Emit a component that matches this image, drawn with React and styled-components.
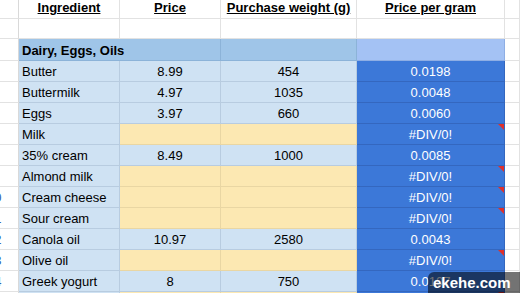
import React from "react";
import styled, { createGlobalStyle } from "styled-components";

const Global = createGlobalStyle`
  html, body { margin: 0; padding: 0; overflow: hidden; background: #fff; }
  body { font-family: "Liberation Sans", Arial, sans-serif; }
`;

const tones = {
  white: { bg: "#ffffff", line: "#e2e2e2", fg: "#000" },
  light: { bg: "#cfe2f3", line: "#b8cce0", fg: "#000" },
  section: { bg: "#9fc5e8", line: "#8cb3d8", fg: "#000" },
  sectionD: { bg: "#a4c2f4", line: "#8eaee4", fg: "#000" },
  peach: { bg: "#fce8b2", line: "#e9d6a3", fg: "#000" },
  dark: { bg: "#3c78d8", line: "#3467bf", fg: "#fff" },
};

const Page = styled.div`
  position: relative;
  width: 520px;
  height: 293px;
  overflow: hidden;
`;

const Sheet = styled.div`
  display: grid;
  grid-template-columns: 19px 101px 101px 136px 148px 1fr;
  font-size: 13px;
  line-height: 15px;
`;

const Cell = styled.div`
  box-sizing: border-box;
  position: relative;
  height: ${(p) => p.$h}px;
  grid-column: span ${(p) => p.$span || 1};
  background: ${(p) => tones[p.$tone].bg};
  color: ${(p) => tones[p.$tone].fg};
  border-right: 1px solid ${(p) => tones[p.$tone].line};
  border-bottom: 1px solid ${(p) => tones[p.$tone].line};
  display: flex;
  align-items: flex-end;
  justify-content: ${(p) => (p.$center ? "center" : "flex-start")};
  padding: 0 3px ${(p) => p.$pb ?? 2}px;
  white-space: nowrap;
  overflow: hidden;
  font-weight: ${(p) => (p.$bold ? 700 : 400)};
  text-decoration: ${(p) => (p.$underline ? "underline" : "none")};
`;

const Gutter = styled.div`
  box-sizing: border-box;
  height: ${(p) => p.$h}px;
  background: #fff;
  border-right: 1px solid #d9d9d9;
  border-bottom: 1px solid #e2e2e2;
  display: flex;
  align-items: flex-end;
  justify-content: flex-end;
  padding: 0 16.5px 2px 0;
  overflow: hidden;
  white-space: nowrap;
  color: #2f5fb0;
`;

const ErrorMark = styled.span`
  position: absolute;
  top: 0;
  right: 0;
  width: 0;
  height: 0;
  border-left: 6px solid transparent;
  border-top: 6px solid #e0302a;
`;

const Watermark = styled.div`
  position: absolute;
  left: 428px;
  top: 272px;
  width: 100px;
  height: 26px;
  border-radius: 6px;
  background: rgba(0, 0, 0, 0.55);
  color: #fff;
  font-family: "Liberation Sans", Arial, sans-serif;
  font-weight: 700;
  font-size: 15px;
  line-height: 22px;
  padding-left: 5px;
  box-sizing: border-box;
`;

const items = [
  ["Butter", "8.99", "454", "0.0198"],
  ["Buttermilk", "4.97", "1035", "0.0048"],
  ["Eggs", "3.97", "660", "0.0060"],
  ["Milk", "", "", "#DIV/0!"],
  ["35% cream", "8.49", "1000", "0.0085"],
  ["Almond milk", "", "", "#DIV/0!"],
  ["Cream cheese", "", "", "#DIV/0!"],
  ["Sour cream", "", "", "#DIV/0!"],
  ["Canola oil", "10.97", "2580", "0.0043"],
  ["Olive oil", "", "", "#DIV/0!"],
  ["Greek yogurt", "8", "750", "0.0107"],
  ["", "", "", ""],
];

const headers = ["Ingredient", "Price", "Purchase weight (g)", "Price per gram"];

export default function App() {
  return (
    <Page>
      <Global />
      <Sheet>
        <Gutter $h={19} />
        {headers.map((h) => (
          <Cell key={h} $h={19} $tone="white" $center $bold $underline $pb={3}>
            {h}
          </Cell>
        ))}
        <Cell $h={19} $tone="white" />

        <Gutter $h={20} />
        <Cell $h={20} $tone="white" />
        <Cell $h={20} $tone="white" />
        <Cell $h={20} $tone="white" />
        <Cell $h={20} $tone="white" />
        <Cell $h={20} $tone="white" />

        <Gutter $h={22} />
        <Cell $h={22} $tone="section" $span={2} $bold>
          Dairy, Eggs, Oils
        </Cell>
        <Cell $h={22} $tone="section" />
        <Cell $h={22} $tone="sectionD" />
        <Cell $h={22} $tone="white" />

        {items.map(([name, price, weight, ppg], i) => {
          const rowNum = i + 4;
          const missing = price === "";
          return (
            <React.Fragment key={i}>
              <Gutter $h={21}>{rowNum >= 10 ? rowNum : ""}</Gutter>
              <Cell $h={21} $tone="light">{name}</Cell>
              <Cell $h={21} $tone={missing ? "peach" : "light"} $center>
                {price}
              </Cell>
              <Cell $h={21} $tone={missing ? "peach" : "light"} $center>
                {weight}
              </Cell>
              <Cell $h={21} $tone="dark" $center>
                {ppg}
                {missing && <ErrorMark />}
              </Cell>
              <Cell $h={21} $tone="white" />
            </React.Fragment>
          );
        })}
      </Sheet>
      <Watermark>ekehe.com</Watermark>
    </Page>
  );
}
